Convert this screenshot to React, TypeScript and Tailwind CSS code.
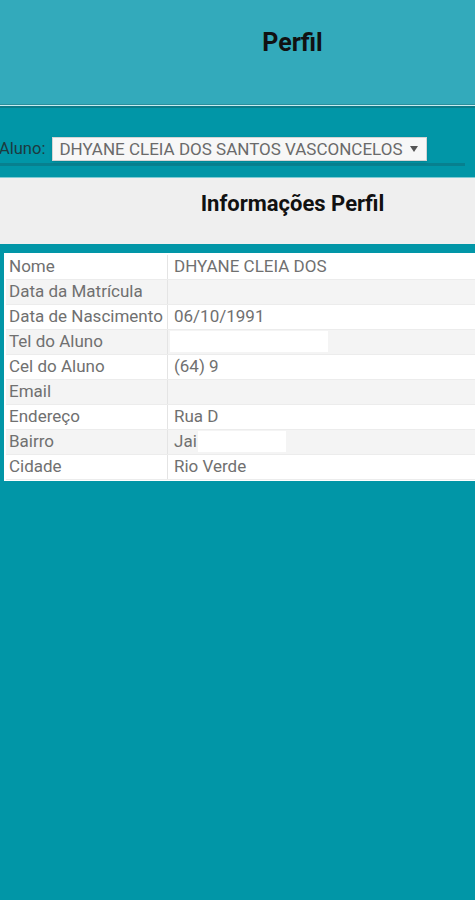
import React from "react";

const rows: { label: string; value: string; mask?: string }[] = [
  { label: "Nome", value: "DHYANE CLEIA DOS" },
  { label: "Data da Matrícula", value: "" },
  { label: "Data de Nascimento", value: "06/10/1991" },
  { label: "Tel do Aluno", value: "", mask: "w-[158px] ml-[-4px]" },
  { label: "Cel do Aluno", value: "(64) 9" },
  { label: "Email", value: "" },
  { label: "Endereço", value: "Rua D" },
  { label: "Bairro", value: "Jai", mask: "w-[88px] ml-[1px]" },
  { label: "Cidade", value: "Rio Verde" },
];

const App = () => {
  return (
    <div className="min-h-[900px] bg-[#0196a7] font-['Roboto',sans-serif]">
      {/* top bar */}
      <div className="h-[104px] bg-[#33aabb] pl-[110px] pt-[27px] text-center">
        <h1 className="text-[25px] leading-[32px] font-bold text-[#111]">Perfil</h1>
      </div>
      <div className="h-px bg-[#2a8f9c]" />
      <div className="h-px bg-[#c9ecf0]" />
      <div className="h-[2px] bg-[#0a7d8b]" />

      {/* aluno select */}
      <div className="pt-[29px]">
        <div className="flex items-center gap-[7px]">
          <span className="text-[16.5px] text-[#1d3a3f] ml-[-1px]">Aluno:</span>
          <div className="flex items-center h-[24px] w-[375px] bg-[#f7f7f7] border border-[#d4d4d4] pl-[6px] pr-[8px] text-[17px] text-[#6a6a6a] shadow-sm">
            <span className="flex-1 whitespace-nowrap">DHYANE CLEIA DOS SANTOS VASCONCELOS</span>
            <svg width="8" height="6" viewBox="0 0 8 6" className="ml-[6px] shrink-0">
              <path d="M0 0h8L4 6z" fill="#555" />
            </svg>
          </div>
        </div>
        <div className="h-[3px] mt-[1px] mr-[10px] bg-[#07808f]" />
      </div>

      {/* panel */}
      <div className="mt-[11px] h-px bg-[#7fcbd4]" />
      <div className="h-[66px] bg-[#efefef] pl-[110px] pt-[11px] text-center">
        <h2 className="text-[22px] leading-[30px] font-bold text-[#111]">Informações Perfil</h2>
      </div>

      {/* table */}
      <div className="mt-[9px] ml-[4px] bg-white pt-[2px] pl-[2px] pb-[1px]">
        {rows.map((r, i) => (
          <div
            key={r.label}
            className={`flex h-[25px] items-center border-b border-[#ececec] text-[17px] text-[#707070] ${
              i % 2 === 1 ? "bg-[#f4f4f4]" : "bg-white"
            }`}
          >
            <div className="w-[162px] h-full flex items-center pl-[3px] border-r border-[#e4e4e4] whitespace-nowrap">
              {r.label}
            </div>
            <div className="flex-1 h-full flex items-center pl-[6px] whitespace-nowrap">
              {r.value && <span>{r.value}</span>}
              {r.mask && <span className={`h-[21px] bg-white ${r.mask}`} />}
            </div>
          </div>
        ))}
      </div>
    </div>
  );
};

export default App;
